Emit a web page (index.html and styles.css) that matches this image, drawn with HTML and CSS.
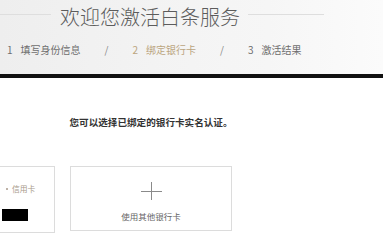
FILE: index.html
```html
<!DOCTYPE html>
<html lang="zh-CN">
<head>
<meta charset="utf-8">
<title>欢迎您激活白条服务</title>
<link rel="stylesheet" href="styles.css">
</head>
<body>
<header class="header">
  <div class="title-row">
    <span class="title-line title-line-left"></span>
    <h1 class="title">欢迎您激活白条服务</h1>
    <span class="title-line title-line-right"></span>
  </div>
  <ol class="steps">
    <li class="step"><span class="step-num">1</span>填写身份信息</li>
    <li class="step-sep">/</li>
    <li class="step step-active"><span class="step-num">2</span>绑定银行卡</li>
    <li class="step-sep">/</li>
    <li class="step"><span class="step-num">3</span>激活结果</li>
  </ol>
</header>
<div class="divider"></div>
<main class="main">
  <p class="hint">您可以选择已绑定的银行卡实名认证。</p>
  <div class="cards">
    <div class="card card-bound">
      <div class="card-info">
        <div class="card-type"><span class="dot"></span>信用卡</div>
        <div class="card-mask"></div>
      </div>
    </div>
    <div class="card card-add">
      <svg class="plus" width="21" height="20" viewBox="0 0 21 20" aria-hidden="true">
        <line x1="0" y1="10.5" x2="21" y2="10.5" stroke="#8a8a8a" stroke-width="1"/>
        <line x1="10.5" y1="1" x2="10.5" y2="19" stroke="#8a8a8a" stroke-width="1"/>
      </svg>
      <div class="add-text">使用其他银行卡</div>
    </div>
  </div>
</main>
</body>
</html>
```
FILE: styles.css
```css
* { box-sizing: border-box; }
html, body { margin: 0; padding: 0; }
body {
  background: #fff;
  font-family: "Noto Sans CJK SC", "Noto Sans", sans-serif;
  color: #555;
  width: 383px;
  overflow: hidden;
}
.header {
  height: 74px;
  background: linear-gradient(90deg, #eeeeee 0%, #f3f3f3 40%, #f6f6f6 70%, #fbfbfb 100%);
  padding-top: 3px;
}
.title-row {
  display: flex;
  align-items: flex-start;
  height: 28px;
}
.title-line {
  display: block;
  height: 1px;
  background: #dedede;
  margin-top: 11px;
}
.title-line-left { width: 51px; margin-right: 9px; }
.title-line-right { width: 76px; margin-left: 8px; }
.title {
  margin: 0;
  font-size: 20px;
  line-height: 28px;
  font-weight: 300;
  color: #5c5c5c;
  white-space: nowrap;
}
.steps {
  list-style: none;
  margin: 12px 0 0;
  padding: 0 0 0 7px;
  display: flex;
  gap: 24px;
  font-size: 10px;
  line-height: 14px;
  color: #6e6e6e;
}
.step { display: flex; white-space: nowrap; }
.step-num { margin-right: 8px; }
.step-active { color: #bba57f; }
.step-sep { color: #888; }
.divider {
  height: 4px;
  background: #111;
}
.main {
  width: 302px;
  padding-top: 37px;
}
.hint {
  margin: 0;
  text-align: center;
  font-size: 9.6px;
  line-height: 14px;
  font-weight: 700;
  color: #333;
}
.cards {
  display: flex;
  gap: 15px;
  margin-top: 37px;
  margin-left: -107px;
}
.card {
  width: 162px;
  border: 1px solid #dcdcdc;
  background: #fff;
}
.card-bound { height: 67px; }
.card-info {
  margin-left: 108px;
  padding-top: 16px;
}
.card-type {
  display: flex;
  align-items: center;
  font-size: 7.8px;
  line-height: 12px;
  color: #a8998a;
}
.dot {
  width: 2px;
  height: 2px;
  background: #a8998a;
  border-radius: 50%;
  margin-left: 4px;
  margin-right: 4px;
}
.card-mask {
  width: 26px;
  height: 12px;
  background: #000;
  margin-top: 14px;
}
.card-add {
  height: 65px;
  display: flex;
  flex-direction: column;
  align-items: center;
  padding-top: 14px;
}
.plus { display: block; }
.add-text {
  margin-top: 9px;
  font-size: 8.5px;
  line-height: 12px;
  color: #666;
  white-space: nowrap;
}
```
